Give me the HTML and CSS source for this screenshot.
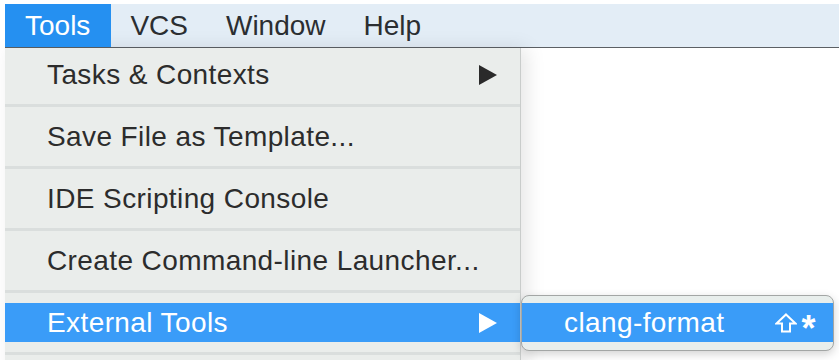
FILE: index.html
```html
<!DOCTYPE html>
<html lang="en">
<head>
    <meta charset="UTF-8">
    <meta name="viewport" content="width=device-width, initial-scale=1.0">
    <title>Tools menu</title>
    <link rel="stylesheet" href="styles.css">
</head>
<body>
    <nav class="menubar">
        <span class="menubar-item active">Tools</span>
        <span class="menubar-item">VCS</span>
        <span class="menubar-item">Window</span>
        <span class="menubar-item">Help</span>
    </nav>

    <div class="menu">
        <div class="menu-item">
            <span class="label">Tasks &amp; Contexts</span>
            <span class="arrow"></span>
        </div>
        <div class="separator"></div>
        <div class="menu-item">
            <span class="label">Save File as Template...</span>
        </div>
        <div class="separator"></div>
        <div class="menu-item">
            <span class="label">IDE Scripting Console</span>
        </div>
        <div class="separator"></div>
        <div class="menu-item">
            <span class="label">Create Command-line Launcher...</span>
        </div>
        <div class="separator"></div>
        <div class="menu-item selected">
            <span class="label">External Tools</span>
            <span class="arrow"></span>

            <!-- submenu opens over the editor area -->
            <div class="submenu">
                <div class="menu-item selected">
                    <span class="label">clang-format</span>
                    <span class="shortcut">
                        <svg class="shift" width="22" height="20" viewBox="0 0 22 20">
                            <path d="M11 1.5 L20.5 10.5 L15 10.5 L15 18.5 L7 18.5 L7 10.5 L1.5 10.5 Z" fill="none" stroke="#fff" stroke-width="2"/>
                        </svg>
                        <span class="key">*</span>
                    </span>
                </div>
            </div>
        </div>
        <div class="separator"></div>
    </div>
</body>
</html>
```

FILE: styles.css
```css
body {
    margin: 0;
    padding: 4px 0 0 5px;
    height: 360px;
    overflow: hidden;
    background-color: #fff;
    font-family: "Liberation Sans", Arial, sans-serif;
    color: #2c2c2c;
}

.menubar {
    display: flex;
    height: 43px;
    background-color: #e3edf6;
    border-bottom: 1px solid #5c6064;
}

.menubar-item {
    padding: 0 19px;
    font-size: 28px;
    line-height: 43px;
    color: #2b2e31;
}

.menubar-item.active {
    padding-left: 20px;
    padding-right: 21px;
    background-color: #2590f1;
    color: #fff;
}

.menu {
    width: 515px;
    height: 320px;
    padding-top: 7px;
    background-color: #eaedeb;
    border-right: 1px solid #c9cccb;
    box-shadow: 6px 0 18px rgba(0, 0, 0, 0.10);
}

.menu-item {
    position: relative;
    display: flex;
    align-items: center;
    justify-content: space-between;
    height: 39px;
    padding: 0 23px 0 42px;
    font-size: 28px;
    letter-spacing: 0.4px;
}

.menu-item.selected {
    background-color: #3a9cf8;
    color: #fff;
}

.arrow {
    width: 0;
    height: 0;
    border-top: 10px solid transparent;
    border-bottom: 10px solid transparent;
    border-left: 18px solid #2a2a2a;
}

.selected .arrow {
    border-left-color: #fff;
}

.separator {
    height: 3px;
    margin: 10px 0;
    background-color: #dadedd;
}

.submenu {
    position: absolute;
    top: -8px;
    left: 100%;
    margin-left: 1px;
    width: 311px;
    padding: 7px 0 8px;
    background-color: #e8eeec;
    border: 1px solid #a3a6a5;
    border-radius: 8px;
    box-shadow: 0 3px 10px rgba(0, 0, 0, 0.18);
    overflow: hidden;
}

.submenu .menu-item {
    padding: 0 17px 0 42px;
}

.shortcut {
    display: flex;
    align-items: center;
    gap: 5px;
}

.shift {
    display: block;
}

.key {
    font-size: 36px;
    font-weight: bold;
    line-height: 1;
    padding-top: 12px;
}
```
